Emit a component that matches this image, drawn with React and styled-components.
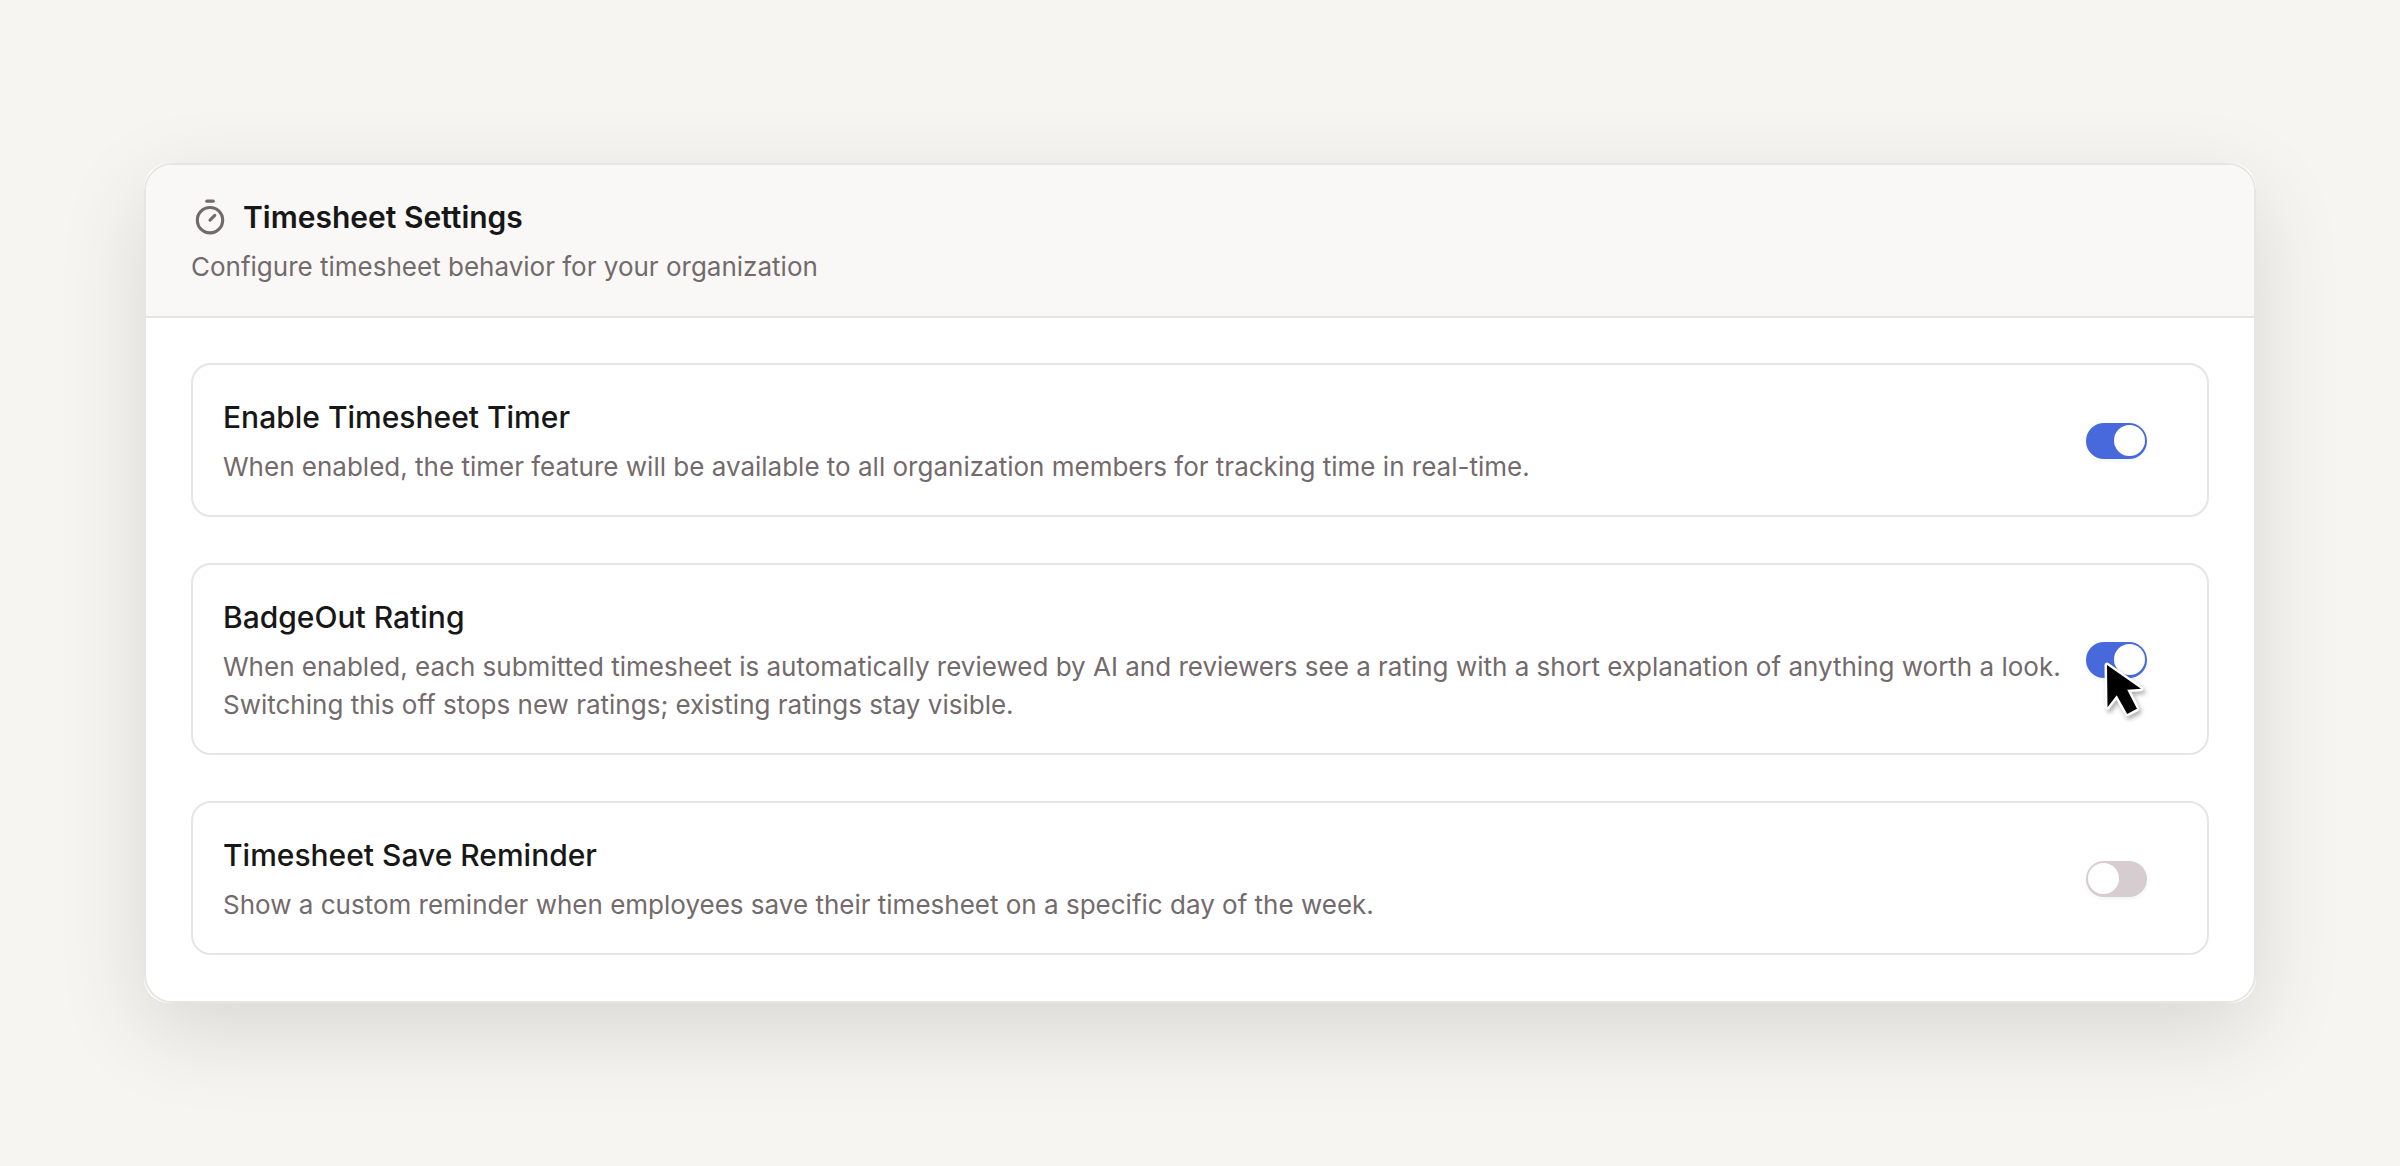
import { useState } from 'react';
import styled, { createGlobalStyle } from 'styled-components';
import { Timer } from 'lucide-react';

const GlobalStyle = createGlobalStyle`
  * {
    box-sizing: border-box;
  }

  body {
    margin: 0;
    background-color: #f6f5f1;
    color: #171717;
    font-family: Inter, 'Liberation Sans', sans-serif;
  }
`;

const StyledPage = styled.main`
  min-height: 100vh;
  padding: 48px 144px;
  display: flex;
  align-items: center;
`;

const StyledFrame = styled.div`
  width: 100%;
  border-radius: 25px;
  background-color: #fff;
  box-shadow: 0 28px 90px rgba(0, 0, 0, 0.12);
`;

const StyledPanel = styled.section`
  overflow: hidden;
  border: 2px solid #e7e4e4;
  border-radius: 28px;
  background-color: #fff;
`;

const StyledHeader = styled.header`
  padding: 31px 45px 30px;
  border-bottom: 2px solid #e7e4e4;
  background-color: #f9f8f6;
`;

const StyledHeading = styled.div`
  display: flex;
  align-items: center;
  gap: 14px;
  margin-bottom: 10px;
  color: #736a6c;
`;

const StyledTitle = styled.h1`
  margin: 0;
  font-size: 30px;
  font-weight: 600;
  line-height: 42px;
  color: #171717;
`;

const StyledDescription = styled.p`
  margin: 0;
  font-size: 26px;
  line-height: 38px;
  color: #736a6c;
`;

const StyledBody = styled.div`
  padding: 45px 45px 46px;
  display: flex;
  flex-direction: column;
  gap: 46px;
`;

const StyledRow = styled.div`
  padding: 31px 60px 29px 30px;
  display: flex;
  align-items: center;
  justify-content: space-between;
  gap: 20px;
  border: 2px solid #e7e4e4;
  border-radius: 20px;
`;

const StyledLabel = styled.label`
  display: block;
  margin-bottom: 10px;
  font-size: 30px;
  font-weight: 500;
  line-height: 42px;
`;

const StyledToggle = styled.div`
  position: relative;
  flex: none;
  display: flex;
`;

const StyledSwitch = styled.input`
  appearance: none;
  width: 61px;
  height: 36px;
  margin: 0;
  padding: 2px;
  display: flex;
  justify-content: ${({ checked }) => (checked ? 'flex-end' : 'flex-start')};
  border-radius: 18px;
  background-color: ${({ checked }) => (checked ? '#4769dc' : '#d7cdd0')};
  box-shadow: 0 2px 4px rgba(0, 0, 0, 0.05);

  &::before {
    content: '';
    width: 31px;
    height: 31px;
    border-radius: 50%;
    background-color: #fff;
  }
`;

const StyledPointer = styled.svg`
  position: absolute;
  top: 18px;
  left: 16px;
  overflow: visible;
  pointer-events: none;
  filter: drop-shadow(2px 3px 2px rgba(0, 0, 0, 0.3));
`;

const Pointer = () => (
  <StyledPointer width='40' height='56' viewBox='0 0 40 56' aria-hidden='true'>
    <path
      d='M5 5L39 28.7L25.2 29.7L35 48.7L25.2 54L14.7 35.3L5.5 47.3Z'
      fill='#000'
      stroke='#fff'
      strokeWidth='5'
      strokeLinejoin='round'
      paintOrder='stroke'
    />
  </StyledPointer>
);

const settings = [
  {
    id: 'timer',
    title: 'Enable Timesheet Timer',
    description:
      'When enabled, the timer feature will be available to all organization members for tracking time in real-time.',
    enabled: true,
  },
  {
    id: 'rating',
    title: 'BadgeOut Rating',
    description:
      'When enabled, each submitted timesheet is automatically reviewed by AI and reviewers see a rating with a short explanation of anything worth a look. Switching this off stops new ratings; existing ratings stay visible.',
    enabled: true,
    hasPointer: true,
  },
  {
    id: 'reminder',
    title: 'Timesheet Save Reminder',
    description:
      'Show a custom reminder when employees save their timesheet on a specific day of the week.',
    enabled: false,
  },
];

const SettingRow = ({ id, title, description, enabled, hasPointer }) => {
  const [isEnabled, setIsEnabled] = useState(enabled);
  return (
    <StyledRow>
      <div>
        <StyledLabel htmlFor={id}>{title}</StyledLabel>
        <StyledDescription id={`${id}-description`}>{description}</StyledDescription>
      </div>
      <StyledToggle>
        <StyledSwitch
          id={id}
          type='checkbox'
          role='switch'
          aria-describedby={`${id}-description`}
          checked={isEnabled}
          onChange={() => setIsEnabled((prevState) => !prevState)}
        />
        {hasPointer && <Pointer />}
      </StyledToggle>
    </StyledRow>
  );
};

const App = () => (
  <>
    <GlobalStyle />
    <StyledPage>
      <StyledFrame>
        <StyledPanel>
          <StyledHeader>
            <StyledHeading>
              <Timer size={38} aria-hidden='true' />
              <StyledTitle>Timesheet Settings</StyledTitle>
            </StyledHeading>
            <StyledDescription>Configure timesheet behavior for your organization</StyledDescription>
          </StyledHeader>
          <StyledBody>
            {settings.map((setting) => (
              <SettingRow key={setting.id} {...setting} />
            ))}
          </StyledBody>
        </StyledPanel>
      </StyledFrame>
    </StyledPage>
  </>
);

export default App;
